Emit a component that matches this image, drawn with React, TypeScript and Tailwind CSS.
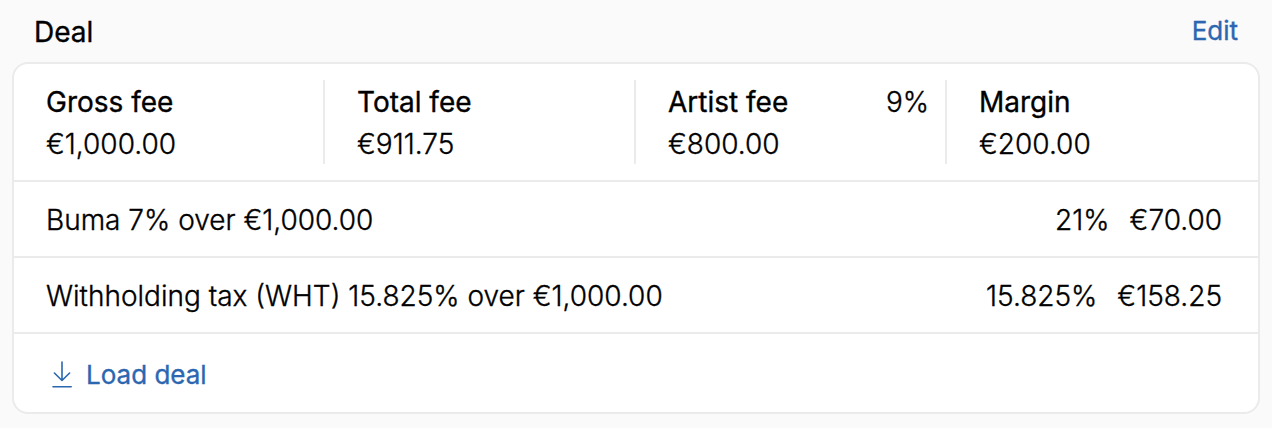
const fees = [
  { label: 'Gross fee', amount: '€1,000.00' },
  { label: 'Total fee', amount: '€911.75' },
  { label: 'Artist fee', amount: '€800.00', rate: '9%' },
  { label: 'Margin', amount: '€200.00' },
];

const taxes = [
  { label: 'Buma 7% over €1,000.00', rate: '21%', amount: '€70.00' },
  { label: 'Withholding tax (WHT) 15.825% over €1,000.00', rate: '15.825%', amount: '€158.25' },
];

const DownloadIcon = () => (
  <svg className="mb-0.5" width="20" height="27" viewBox="0 0 20 27" fill="none" stroke="currentColor" strokeWidth="1.6" strokeLinecap="round" strokeLinejoin="round">
    <path d="M10 1v18.5M2.4 12l7.6 7.5 7.6-7.5M1 25.8h18.2" />
  </svg>
);

export default function App() {
  return (
    <div className="h-[428px] w-[1272px] bg-[#fafafa] px-3 font-['Inter',sans-serif] text-[28px] leading-[42px] font-light text-black [-webkit-text-stroke:0.35px]">
      <div className="flex h-[62px] items-center justify-between px-[22px]">
        <h2 className="pt-0.5 font-normal">Deal</h2>
        <button className="text-[26px] font-normal text-[#2b67b1]">Edit</button>
      </div>
      <div className="h-[352px] rounded-2xl border-2 border-[#ebebeb] bg-white">
        <div className="flex h-[116px] py-4">
          {fees.map((fee) => (
            <div
              key={fee.label}
              className="flex w-[311px] justify-between border-r-2 border-[#ebebeb] pt-px pr-4 pl-8 last:border-r-0"
            >
              <div>
                <div className="font-normal">{fee.label}</div>
                <div>{fee.amount}</div>
              </div>
              {fee.rate && <div>{fee.rate}</div>}
            </div>
          ))}
        </div>
        {taxes.map((tax) => (
          <div
            key={tax.label}
            className="flex h-[76px] items-center justify-between border-t-2 border-[#ebebeb] pt-0.5 pr-9 pl-8"
          >
            <div>{tax.label}</div>
            <div className="flex gap-5">
              <span>{tax.rate}</span>
              <span>{tax.amount}</span>
            </div>
          </div>
        ))}
        <div className="flex h-20 items-center border-t-2 border-[#ebebeb] pt-1 pl-[38px]">
          <button className="flex items-center gap-3.5 text-[26px] font-normal text-[#2b67b1]">
            <DownloadIcon />
            Load deal
          </button>
        </div>
      </div>
    </div>
  );
}
